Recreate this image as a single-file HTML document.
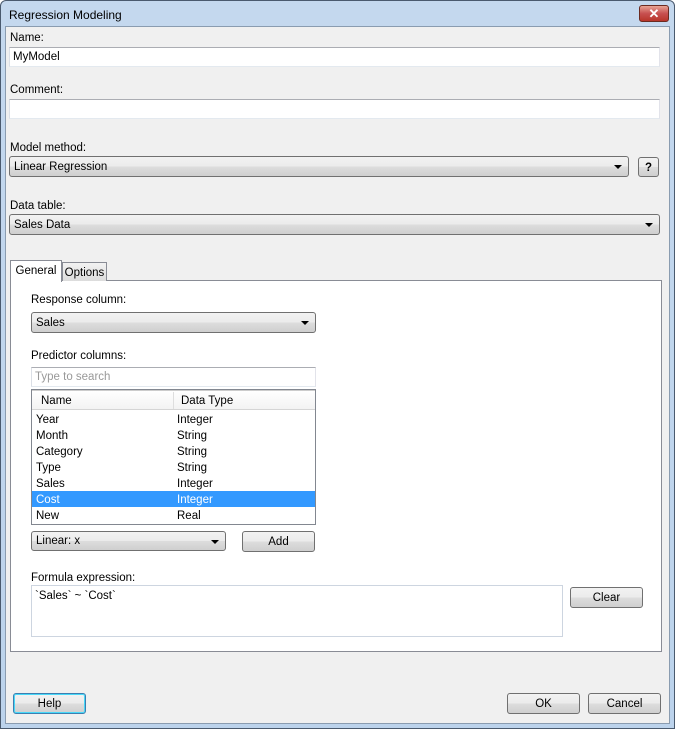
<!DOCTYPE html><html><head><style>
*{box-sizing:border-box}
body{margin:0;width:675px;height:729px;overflow:hidden;font-family:"Liberation Sans",sans-serif;font-size:11.5px;color:#000;background:#fff}
.win{position:absolute;left:0;top:0;width:675px;height:729px;background:linear-gradient(#c4d8ee,#bcd3ec);border:1px solid #4a5a6e;border-radius:6px 6px 0 0}
.client{position:absolute;left:4px;top:25px;width:665px;height:698px;background:#f0f0f0;border:1px solid #8a9cb0}
.a{position:absolute}
.lbl{position:absolute;white-space:nowrap;line-height:14px}
.inp{position:absolute;background:#fff;border:1px solid #abadb3;border-color:#abadb3 #e2e3ea #e3e9ef #dbdfe6}
.cb{position:absolute;border:1px solid #707070;border-radius:3px;background:linear-gradient(#f2f2f2 0,#ebebeb 50%,#dddddd 51%,#cfcfcf 100%);padding-left:4px;line-height:20px}
.cb:after{content:"";position:absolute;right:6px;top:8px;border:4px solid transparent;border-top:4px solid #000;border-bottom:0}
.btn{position:absolute;border:1px solid #707070;border-radius:3px;background:linear-gradient(#f2f2f2 0,#ebebeb 50%,#dddddd 51%,#cfcfcf 100%);text-align:center;line-height:20px}
</style></head><body>
<div class="win">
<div class="lbl" style="left:8px;top:7px;font-size:12px">Regression Modeling</div>
<div class="a" style="left:638px;top:4px;width:30px;height:17px;border:1px solid #6b2a20;border-radius:3px;background:linear-gradient(#e8a394,#c75050 50%,#b8352a);color:#fff;font-weight:bold;text-align:center;line-height:15px;font-size:13px">✕</div>
<div class="client"></div>
</div>
<div class="lbl" style="left:10px;top:31px">Name:</div>
<div class="inp" style="left:9px;top:47px;width:651px;height:20px;padding:3px 3px">MyModel</div>
<div class="lbl" style="left:10px;top:83px">Comment:</div>
<div class="inp" style="left:9px;top:99px;width:651px;height:20px"></div>
<div class="lbl" style="left:10px;top:141px">Model method:</div>
<div class="cb" style="left:9px;top:156px;width:620px;height:21px">Linear Regression</div>
<div class="btn" style="left:638px;top:157px;width:21px;height:20px;font-weight:bold">?</div>
<div class="lbl" style="left:10px;top:199px">Data table:</div>
<div class="cb" style="left:9px;top:214px;width:651px;height:21px">Sales Data</div>
<div class="a" style="left:10px;top:280px;width:652px;height:372px;background:#fff;border:1px solid #898c95"></div>
<div class="a" style="left:62px;top:262px;width:45px;height:19px;background:linear-gradient(#f2f2f2,#dcdcdc);border:1px solid #898c95;border-bottom:none;text-align:center;line-height:20px">Options</div>
<div class="a" style="left:10px;top:260px;width:52px;height:22px;background:#fff;border:1px solid #898c95;border-bottom:none;text-align:center;line-height:20px">General</div>
<div class="lbl" style="left:31px;top:293px">Response column:</div>
<div class="cb" style="left:31px;top:312px;width:285px;height:21px">Sales</div>
<div class="lbl" style="left:31px;top:349px">Predictor columns:</div>
<div class="inp" style="left:31px;top:367px;width:285px;height:20px;padding:3px 3px;color:#999">Type to search</div>
<div class="a" style="left:31px;top:389px;width:285px;height:136px;border:1px solid #828790;background:#fff">
<div class="a" style="left:0;top:0;width:283px;height:20px;background:linear-gradient(#fff,#f3f3f3);border-bottom:1px solid #d5d5d5;border-top:1px solid #ccc"></div>
<div class="a" style="left:141px;top:2px;width:1px;height:17px;background:#dedede"></div>
<div class="lbl" style="left:9px;top:4px">Name</div>
<div class="lbl" style="left:149px;top:4px">Data Type</div>
<div class="a" style="left:0;top:101px;width:283px;height:16px;background:#3399ff"></div>
<div class="lbl" style="left:4px;top:22px;line-height:16px">Year<br>Month<br>Category<br>Type<br>Sales<br><span style="color:#fff">Cost</span><br>New</div>
<div class="lbl" style="left:145px;top:22px;line-height:16px">Integer<br>String<br>String<br>String<br>Integer<br><span style="color:#fff">Integer</span><br>Real</div>
</div>
<div class="cb" style="left:31px;top:531px;width:195px;height:20px;line-height:19px">Linear: x</div>
<div class="btn" style="left:242px;top:531px;width:73px;height:21px">Add</div>
<div class="lbl" style="left:31px;top:571px">Formula expression:</div>
<div class="inp" style="left:31px;top:585px;width:532px;height:52px;padding:4px 3px;border-color:#cdd5e0">`Sales` ~ `Cost`</div>
<div class="btn" style="left:570px;top:587px;width:73px;height:21px">Clear</div>
<div class="btn" style="left:13px;top:693px;width:73px;height:21px;border-color:#3c7fb1;box-shadow:inset 0 0 0 1px #48d8f8">Help</div>
<div class="btn" style="left:507px;top:693px;width:73px;height:21px">OK</div>
<div class="btn" style="left:588px;top:693px;width:73px;height:21px">Cancel</div>
</body></html>
